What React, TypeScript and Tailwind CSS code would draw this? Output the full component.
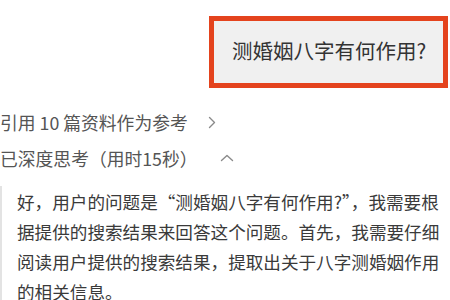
import React from "react";

const font = { fontFamily: '"Noto Sans CJK SC", "Noto Sans", sans-serif' };

function ChevronRight() {
    return (
        <svg width="8" height="13" viewBox="0 0 8 13" fill="none" className="ml-[20px]">
            <path d="M1.5 1.5 L6.5 6.5 L1.5 11.5" stroke="#8a8a8a" strokeWidth="1.4" strokeLinecap="round" strokeLinejoin="round" />
        </svg>
    );
}

function ChevronUp() {
    return (
        <svg width="14" height="8" viewBox="0 0 14 8" fill="none" className="ml-[22px]">
            <path d="M1.5 6.5 L7 1.5 L12.5 6.5" stroke="#8a8a8a" strokeWidth="1.4" strokeLinecap="round" strokeLinejoin="round" />
        </svg>
    );
}

export default function App() {
    const lines = [
        "好，用户的问题是“测婚姻八字有何作用?”，我需要根",
        "据提供的搜索结果来回答这个问题。首先，我需要仔细",
        "阅读用户提供的搜索结果，提取出关于八字测婚姻作用",
        "的相关信息。",
    ];

    return (
        <div className="w-[450px] h-[300px] overflow-hidden bg-white" style={font}>
            {/* user question, outlined in red */}
            <div className="flex justify-end pt-[16px] pr-[2px]">
                <div className="w-[239px] h-[72px] border-[5px] border-[#e4431d] bg-[#f0f0f0] flex items-center pl-[18px] pb-[3px] text-[20.5px] text-[#333]">
                    测婚姻八字有何作用?
                </div>
            </div>

            {/* references */}
            <div className="mt-[22px] h-[24px] flex items-center text-[17.8px] leading-[24px] text-[#555]">
                <span>引用 10 篇资料作为参考</span>
                <ChevronRight />
            </div>

            {/* thinking header */}
            <div className="mt-[12px] h-[24px] flex items-center text-[17.8px] leading-[24px] text-[#555]">
                <span>已深度思考（用时15秒）</span>
                <ChevronUp />
            </div>

            {/* thinking content */}
            <div className="mt-[16px] border-l-2 border-[#e3e3e3] pl-[15px]">
                <p className="text-[17.6px] leading-[30px] text-[#3a3a3a] whitespace-nowrap pt-[1px]">
                    {lines.map((l, i) => (
                        <span key={i} className="block">
                            {l}
                        </span>
                    ))}
                </p>
            </div>
        </div>
    );
}
